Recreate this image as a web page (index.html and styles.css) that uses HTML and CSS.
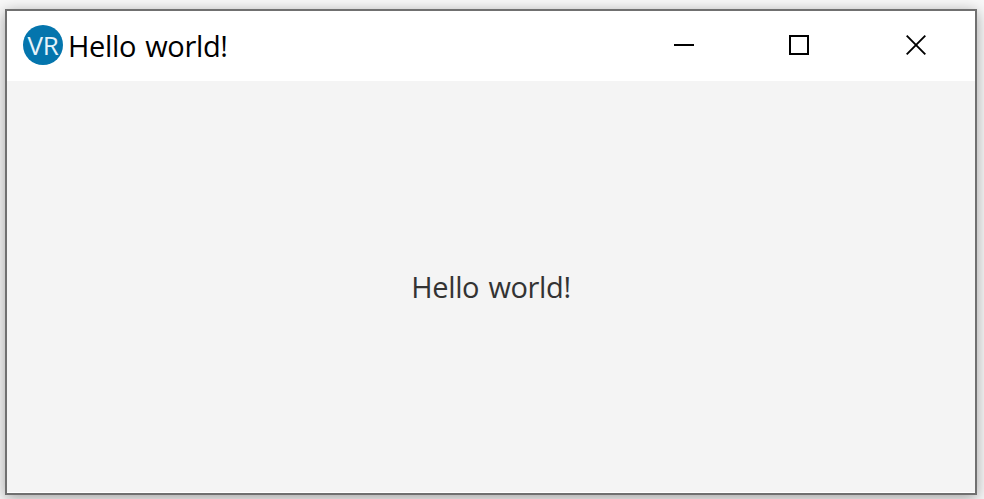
FILE: index.html
```
<!DOCTYPE html>
<html lang="en">
<head>
<meta charset="utf-8">
<title>Hello world!</title>
<link rel="stylesheet" href="styles.css">
</head>
<body>
<div class="window">
  <header class="titlebar">
    <span class="logo">VR</span>
    <span class="title">Hello world!</span>
    <div class="controls">
      <svg width="22" height="22" viewBox="0 0 22 22"><path d="M1 11H21"/></svg>
      <svg width="22" height="22" viewBox="0 0 22 22"><path d="M1 2H19V20H1Z"/></svg>
      <svg width="22" height="22" viewBox="0 0 22 22"><path class="cross" d="M1.7 1.7L20.3 20.3M20.3 1.7L1.7 20.3"/></svg>
    </div>
  </header>
  <main class="content"><span class="label">Hello world!</span></main>
</div>
</body>
</html>
```
FILE: styles.css
```
* { box-sizing: border-box; }
body {
  margin: 0;
  height: 499px;
  padding: 9px 7px 4px 5px;
  overflow: hidden;
  background: #f8f8f8;
  font-family: "Open Sans", "Noto Sans", sans-serif;
}
.window {
  height: 486px;
  border: 2px solid #707070;
  box-shadow: 0 3px 14px rgba(0, 0, 0, 0.36);
  display: flex;
  flex-direction: column;
  background: #fff;
}
.titlebar {
  height: 70px;
  display: flex;
  align-items: center;
  padding: 0 48px 2px 16px;
  background: #fff;
}
.logo {
  width: 40px;
  height: 40px;
  border-radius: 50%;
  background: #0475ad;
  color: #e5f3fa;
  font-size: 26px;
  line-height: 41px;
  letter-spacing: -0.3px;
  text-align: center;
}
.title, .label {
  font-size: 29px;
  line-height: 40px;
  letter-spacing: -0.35px;
  word-spacing: 2px;
  white-space: nowrap;
}
.title {
  margin: 2px 0 0 5px;
  color: #000;
}
.controls {
  margin-left: auto;
  display: flex;
  gap: 94px;
}
.controls svg {
  display: block;
  overflow: visible;
  fill: none;
  stroke: #000;
  stroke-width: 2;
}
.controls .cross { stroke-width: 1.9; }
.content {
  flex: 1;
  margin-bottom: 1px;
  display: flex;
  align-items: center;
  justify-content: center;
  background: #f4f4f4;
  color: #333;
}
```
